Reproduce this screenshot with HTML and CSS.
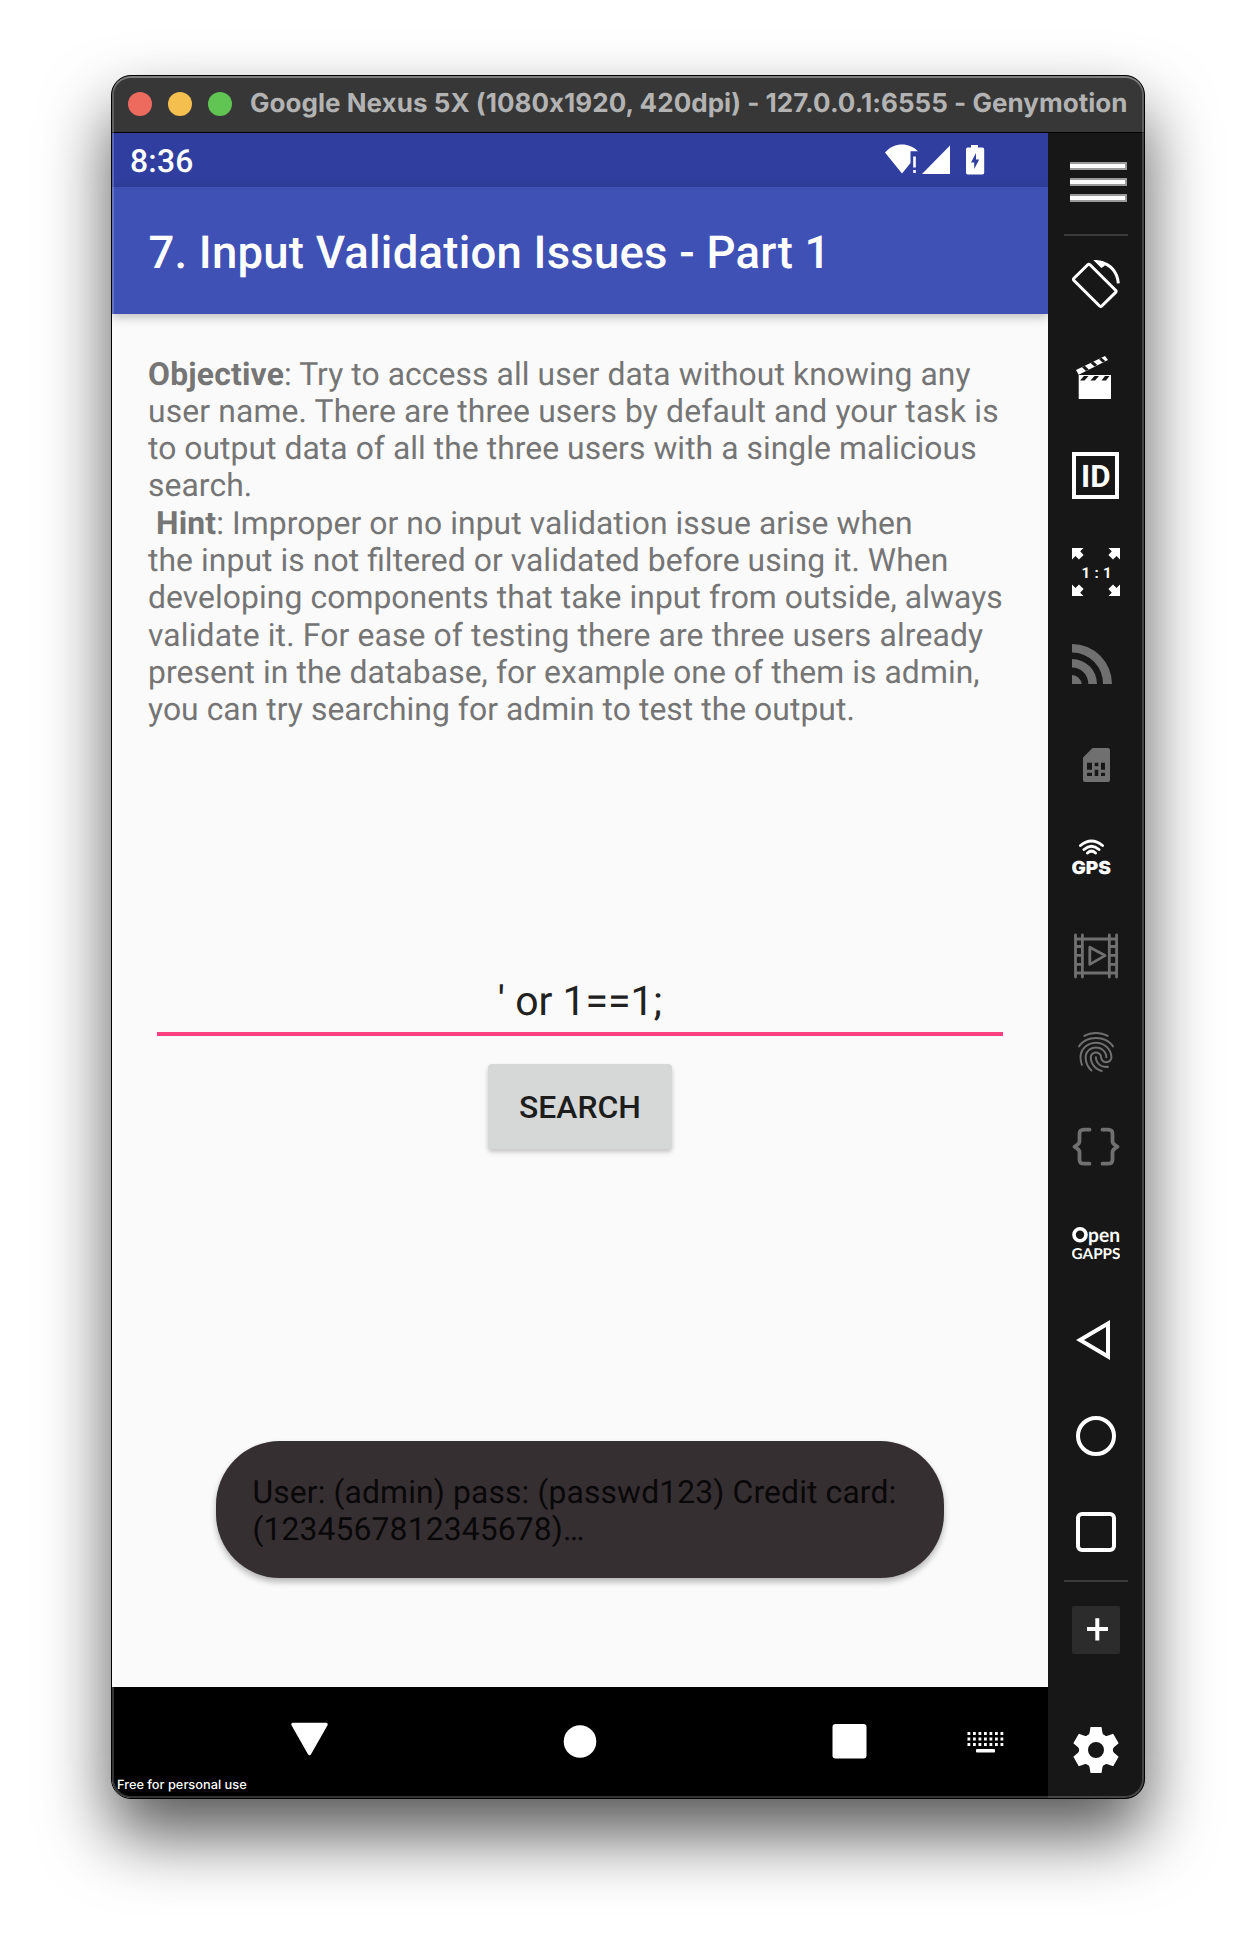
FILE: index.html
```html
<!DOCTYPE html>
<html lang="en">
<head>
<meta charset="utf-8">
<title>Google Nexus 5X - Genymotion</title>
<link rel="stylesheet" href="styles.css">
</head>
<body>
<main class="window">
  <header class="titlebar">
    <span class="light light-close"></span>
    <span class="light light-min"></span>
    <span class="light light-max"></span>
    <h1 class="window-title">Google Nexus 5X (1080x1920, 420dpi) - 127.0.0.1:6555 - Genymotion</h1>
  </header>
  <div class="workspace">
    <section class="phone">
      <div class="statusbar">
        <span class="clock">8:36</span>
        <svg class="status-icons" width="100" height="32" viewBox="0 0 100 32" fill="#fff">
          <path d="M0 8.500C9-2 24-2 33 7.200H25.500V19L17 29.500Z"/>
          <path d="M28.200 12.500h2.600v11h-2.600zM28.200 26h2.600v3h-2.600z"/>
          <path d="M65 1.500V30H37Z"/>
          <path fill-rule="evenodd" d="M86 1h7v2.600h4.400q1.800 0 1.800 1.800v23.400q0 1.800-1.800 1.800H82.800q-1.800 0-1.800-1.800V5.400q0-1.800 1.800-1.800H86ZM91 9l-5 9.500h3.200V25l5-9.500H91Z"/>
        </svg>
      </div>
      <div class="appbar">7. Input Validation Issues - Part 1</div>
      <div class="content">
        <p class="objective"><b>Objective</b>: Try to access all user data without knowing any<br><span class="wide">user name. There are three users by default and your task is</span><br><span class="tight">to output data of all the three users with a single malicious</span><br>search.<br>&nbsp;<b>Hint</b>: Improper or no input validation issue arise when<br>the input is not filtered or validated before using it. When<br>developing components that take input from outside, always<br><span class="wide">validate it. For ease of testing there are three users already</span><br>present in the database, for example one of them is admin,<br><span class="tight">you can try searching for admin to test the output.</span></p>
        <div class="field">' or 1==1;</div>
        <button class="search">SEARCH</button>
        <div class="toast">User: (admin) pass: (passwd123) Credit card:<br>(1234567812345678)…</div>
      </div>
      <nav class="navbar">
        <svg class="nav-icons" width="936" height="111" viewBox="0 0 936 111" fill="#fff">
          <path d="M181 37.500H214L197.500 66.500Z" stroke="#fff" stroke-width="3.500" stroke-linejoin="round"/>
          <circle cx="468" cy="54.500" r="16.300"/>
          <rect x="720.500" y="37" width="34" height="34.500" rx="3"/>
          <path d="M855.500 46.500H891.500M855.500 52H891.500M855.500 57.500H891.500" stroke="#fff" stroke-width="2.800" stroke-dasharray="2.800 2.700"/>
          <rect x="864" y="62" width="19" height="3.500" rx="1"/>
        </svg>
        <span class="license">Free for personal use</span>
      </nav>
    </section>
    <aside class="toolbar">
      <svg class="menu" width="57" height="40" viewBox="0 0 57 40"><path fill="#9a9a9a" d="M0 0h57v8H0zM0 16h57v8H0zM0 32h57v8H0z"/><path fill="#fff" d="M0 2h55v4H0zM0 18h55v4H0zM0 34h55v4H0z"/></svg>
      <hr class="divider">
      <div class="tools">
        <svg viewBox="0 0 48 48"><path d="M15.700 4.800L2 18.300Q1 19.400 2 20.500L27.600 46Q28.700 47 29.800 46L43.600 32.400Q44.600 31.300 43.600 30.200L18 4.800Q16.800 3.700 15.700 4.800Z" fill="none" stroke="#fff" stroke-width="3"/><path d="M28 2.200C38.500 4 45.500 12 46.300 23.300" fill="none" stroke="#fff" stroke-width="3"/><path d="M21.300 0Q28-.4 33 2.300L32.500 6L29.300 8Z" fill="#fff"/></svg>
        <svg viewBox="0 0 48 48" fill="#fff"><path d="M4 14L33 0L36 4L6.700 18.700Z"/><path d="M6.700 19H39V43H6.700Z"/><path d="M10 11.200L12.800 9.800L16.800 13.400L14 14.900ZM18.500 7L21.300 5.600L25.300 9.100L22.500 10.600ZM27 3L29.500 1.700L33.500 5.200L30.500 6.600ZM12 20H16.500L12.500 24.500H8ZM22.500 20H27L23 24.500H18.500ZM33 20H37.500L34 24.500H29.500Z" fill="#171717"/></svg>
        <svg viewBox="0 0 48 48" fill="#fff"><rect x="2" y="2" width="43" height="43" fill="none" stroke="#fff" stroke-width="4"/><text x="9" y="35.200" class="t-id" textLength="29.500" lengthAdjust="spacingAndGlyphs">ID</text></svg>
        <svg viewBox="0 0 48 48" fill="#fff"><path id="arrow" d="M0 0H11.500L8.200 3.300L11.600 7L7 11.600L3.500 8L0 11.500Z"/><use href="#arrow" transform="matrix(-1 0 0 1 48 0)"/><use href="#arrow" transform="matrix(1 0 0 -1 0 48)"/><use href="#arrow" transform="matrix(-1 0 0 -1 48 48)"/><text x="9.500" y="29.700" class="t-ratio" textLength="30">1 : 1</text></svg>
        <svg viewBox="0 0 48 48" class="off"><path d="M0 0A40 40 0 0 1 40 40H31A31 31 0 0 0 0 8.500ZM0 15A25 25 0 0 1 25 40H16.300A16.300 16.300 0 0 0 0 23.500ZM0 31A10 10 0 0 1 9.700 40H0Z"/></svg>
        <svg viewBox="0 0 48 48" class="off"><path fill-rule="evenodd" d="M20.500 8H36Q38 8 38 10V40Q38 42 36 42H13Q11 42 11 40V17.500ZM15 22.700V29.700H20V22.700ZM22.700 22.700V26.300H26.300V22.700ZM29 22.700V29.700H33V22.700ZM15 32.700V36H20V32.700ZM22.700 29.700V36H26.300V29.700ZM29 32.700V36H33V32.700Z"/></svg>
        <svg viewBox="0 0 48 48" fill="#fff"><path d="M8.500 9.500Q19.500 .5 30.500 9.500M12 13.500Q19.500 7 27 13.500M15.500 17Q19.500 13.200 23.500 17" fill="none" stroke="#fff" stroke-width="2.900" stroke-linecap="round"/><text x="-.5" y="37.600" class="t-gps" textLength="39.500" lengthAdjust="spacingAndGlyphs">GPS</text></svg>
        <svg viewBox="0 0 48 48" class="off-line"><path d="M3.500 3V45M10.400 3V45M37.300 3V45M44.600 3V45M3.500 7H44.600M3.500 41H44.600M3.500 14.500H10.400M3.500 23.300H10.400M3.500 32.300H10.400M37.300 14.500H44.600M37.300 23.300H44.600M37.300 32.300H44.600M17.800 15.200V32.400L33 23.600Z"/></svg>
        <svg viewBox="0 0 24 24" class="off"><path d="M17.810 4.470c-.08 0-.16-.02-.23-.06C15.660 3.420 14 3 12.010 3c-1.980 0-3.860.47-5.570 1.410-.24.13-.54.04-.68-.2-.13-.24-.04-.55.2-.68C7.820 2.520 9.860 2 12.010 2c2.130 0 3.990.47 6.030 1.520.25.13.34.43.21.67-.09.18-.26.28-.44.28zM3.500 9.720c-.1 0-.2-.03-.29-.09-.23-.16-.28-.47-.12-.7.99-1.400 2.250-2.500 3.750-3.270C9.980 4.040 14 4.030 17.150 5.650c1.500.77 2.760 1.860 3.750 3.250.16.22.11.54-.12.7-.23.16-.54.11-.7-.12-.9-1.260-2.040-2.250-3.390-2.940-2.870-1.470-6.540-1.470-9.400.01-1.360.7-2.500 1.700-3.400 2.960-.08.14-.23.21-.39.21zm6.250 12.070c-.13 0-.26-.05-.35-.15-.87-.87-1.340-1.430-2.010-2.640-.69-1.230-1.050-2.730-1.050-4.340 0-2.970 2.540-5.390 5.660-5.390s5.660 2.420 5.660 5.390c0 .28-.22.5-.5.5s-.5-.22-.5-.5c0-2.420-2.090-4.390-4.660-4.390-2.570 0-4.660 1.970-4.660 4.390 0 1.440.32 2.770.93 3.850.64 1.150 1.080 1.640 1.850 2.420.19.2.19.51 0 .71-.11.1-.24.15-.37.15zm7.170-1.850c-1.190 0-2.240-.3-3.100-.89-1.490-1.010-2.380-2.650-2.380-4.390 0-.28.22-.5.5-.5s.5.22.5.5c0 1.410.72 2.740 1.940 3.560.71.48 1.540.71 2.540.71.24 0 .64-.03 1.040-.1.27-.05.53.13.58.41.05.27-.13.53-.41.58-.57.11-1.070.12-1.210.12zM14.910 22c-.04 0-.09-.01-.13-.02-1.590-.44-2.630-1.030-3.720-2.100-1.400-1.390-2.170-3.240-2.170-5.220 0-1.620 1.380-2.940 3.080-2.940 1.700 0 3.080 1.320 3.080 2.940 0 1.070.93 1.940 2.080 1.940s2.080-.87 2.080-1.940c0-3.770-3.250-6.830-7.250-6.830-2.840 0-5.440 1.580-6.610 4.030-.39.81-.59 1.760-.59 2.800 0 .78.07 2.010.67 3.610.1.26-.03.55-.29.64-.26.1-.55-.04-.64-.29-.49-1.310-.73-2.610-.73-3.960 0-1.200.23-2.290.68-3.240 1.330-2.790 4.280-4.600 7.510-4.600 4.550 0 8.250 3.510 8.250 7.830 0 1.620-1.380 2.940-3.080 2.940s-3.080-1.320-3.080-2.940c0-1.070-.93-1.940-2.080-1.940s-2.080.87-2.080 1.940c0 1.710.66 3.310 1.870 4.510.95.94 1.860 1.460 3.270 1.850.27.07.42.35.35.61-.05.23-.26.38-.47.38z"/></svg>
        <svg viewBox="0 0 48 48" class="off-line brace"><path d="M17.500 5.700H12Q7.500 5.700 7.500 10V17Q7.500 19.500 5 21L2.500 22.700L5 24.400Q7.500 26 7.500 28.500V35.400Q7.500 39.700 12 39.700H17.500M30.500 5.700H36Q40.500 5.700 40.500 10V17Q40.500 19.500 43 21L45.500 22.700L43 24.400Q40.500 26 40.500 28.500V35.400Q40.500 39.700 36 39.700H30.500"/></svg>
        <svg viewBox="0 0 48 48" fill="#fff"><circle cx="8" cy="14.800" r="6" fill="none" stroke="#fff" stroke-width="3.600"/><text x="16" y="22.300" class="t-open" textLength="32" lengthAdjust="spacingAndGlyphs">pen</text><text x="-.5" y="38.600" class="t-gapps" textLength="49" lengthAdjust="spacingAndGlyphs">GAPPS</text></svg>
        <svg viewBox="0 0 48 48" class="line"><path d="M8 24L36 7.500V40.500Z"/></svg>
        <svg viewBox="0 0 48 48" class="line"><circle cx="24" cy="24" r="18"/></svg>
        <svg viewBox="0 0 48 48" class="line"><rect x="6" y="6" width="36" height="36" rx="4"/></svg>
      </div>
      <hr class="divider">
      <div class="add"><svg viewBox="0 0 48 48" class="line"><path d="M15 23H36M25.300 12.300V34.500"/></svg></div>
      <svg class="gear" viewBox="-24 -24 48 48" fill="#fff"><circle r="12.500" fill="none" stroke="#fff" stroke-width="9"/><path id="tooth" d="M-5.500-23H5.500L6.500-17Q7-15 9-14L6-11H-6L-9-14Q-7-15-6.500-17Z"/><use href="#tooth" transform="rotate(60)"/><use href="#tooth" transform="rotate(120)"/><use href="#tooth" transform="rotate(180)"/><use href="#tooth" transform="rotate(240)"/><use href="#tooth" transform="rotate(300)"/></svg>
    </aside>
  </div>
</main>
</body>
</html>
```
FILE: styles.css
```css
* { box-sizing: border-box; }
body {
  margin: 0;
  height: 1946px;
  padding: 75px 111px 0;
  background: #fff;
  font-family: Roboto, "Liberation Sans", sans-serif;
  text-rendering: geometricPrecision;
  overflow: hidden;
}
.window {
  position: relative;
  width: 1034px;
  height: 1724px;
  border: 1px solid #000;
  border-radius: 20px;
  overflow: hidden;
  background: #171717;
  box-shadow: 0 36px 68px rgba(0, 0, 0, .66);
}
/* light rim just inside the window edge */
.window::after {
  content: "";
  position: absolute;
  inset: 0;
  border-radius: 19px;
  box-shadow: inset 0 0 0 2px rgba(255, 255, 255, .2), inset 0 2px 0 rgba(255, 255, 255, .2);
  pointer-events: none;
}
.titlebar {
  display: flex;
  align-items: center;
  height: 57px;
  padding-left: 16px;
  gap: 16px;
  background: #373737;
  border-bottom: 1px solid #000;
}
.light { width: 24px; height: 24px; border-radius: 50%; }
.light-close { background: #ed6a5e; }
.light-min { background: #f5bf4f; }
.light-max { background: #61c554; }
.window-title {
  margin: -1px 0 0 2px;
  font: 700 26px/30px Inter, sans-serif;
  font-feature-settings: "calt" 0;
  letter-spacing: .035px;
  color: #b3b3b3;
  white-space: nowrap;
}
.workspace { display: flex; height: 1665px; }
.phone { display: flex; flex-direction: column; width: 936px; background: #fafafa; }
.statusbar {
  display: flex;
  justify-content: space-between;
  height: 54px;
  padding: 11px 63px 0 18px;
  background: #303f9f;
}
.clock { font-size: 31.85px; line-height: 34px; font-weight: 500; letter-spacing: .2px; color: #fff; }
.appbar {
  height: 127px;
  padding-left: 36.4px;
  font-size: 45.5px;
  line-height: 133px;
  letter-spacing: .22px;
  font-weight: 500;
  color: #fff;
  white-space: nowrap;
  background: #3f51b5;
  box-shadow: 0 3px 10px rgba(0, 0, 0, .25);
}
.content {
  display: flex;
  flex-direction: column;
  align-items: center;
  height: 1373px;
  padding: 41.5px 36px 0;
}
.objective {
  align-self: flex-start;
  margin: 0;
  height: 374px;
  font-size: 31.85px;
  line-height: 37.32px;
  letter-spacing: .07px;
  font-feature-settings: "liga" 1;
  color: #757575;
  white-space: nowrap;
}
.objective b { letter-spacing: .2px; }
.wide { letter-spacing: .14px; }
.tight { letter-spacing: .045px; }
.field {
  width: 846px;
  height: 65px;
  margin-top: 241.5px;
  padding-top: 6px;
  border-bottom: 4.5px solid #ff4081;
  font-size: 40.95px;
  line-height: 48px;
  text-align: center;
  color: #212121;
}
.search {
  width: 184px;
  height: 85px;
  margin-top: 28px;
  padding: 2px 0 0;
  border: 0;
  border-radius: 4px;
  background: #d6d7d7;
  box-shadow: 0 3px 5px rgba(0, 0, 0, .22);
  font: 500 31.85px/37px Roboto, sans-serif;
  color: #1d1d1d;
}
.toast {
  width: 728px;
  height: 137px;
  margin-top: 291.5px;
  padding: 33px 0 0 36.4px;
  border-radius: 64px;
  background: #362f32;
  box-shadow: 0 4px 6px rgba(0, 0, 0, .28);
  font-size: 31.85px;
  line-height: 37.3px;
  letter-spacing: .13px;
  color: #090809;
  white-space: nowrap;
}
.navbar { display: grid; height: 111px; background: #000; }
.nav-icons, .license { grid-area: 1 / 1; }
.license {
  align-self: end;
  padding: 0 0 4px 5px;
  font: 500 12.8px/16px Inter, sans-serif;
  color: #fff;
}
.toolbar {
  display: flex;
  flex-direction: column;
  align-items: center;
  width: 96px;
  padding-top: 29px;
  background: #171717;
}
.toolbar svg { display: block; flex: none; }
.menu { margin-left: 5px; }
.divider { width: 64px; height: 2px; margin: 32px 0 24px; border: 0; background: #3a3a3a; }
.tools { display: flex; flex-direction: column; gap: 48px; }
.tools svg, .add, .gear { width: 48px; height: 48px; }
.tools + .divider { margin: 24px 0; }
.add { background: #2c2c2c; border-radius: 2px; }
.gear { margin-top: 72px; }
.off { fill: #707070; }
.off-line { fill: none; stroke: #707070; stroke-width: 2.8; stroke-linecap: round; stroke-linejoin: round; }
.brace { stroke-width: 3.8; }
.line { fill: none; stroke: #fff; stroke-width: 4; }
.t-id { font: 700 31px Roboto, sans-serif; }
.t-ratio { font: 700 15px Roboto, sans-serif; }
.t-gps { font: 900 18px Inter, sans-serif; }
.t-open { font: 700 20px Lato, sans-serif; }
.t-gapps { font: 700 15px Lato, sans-serif; }
```
